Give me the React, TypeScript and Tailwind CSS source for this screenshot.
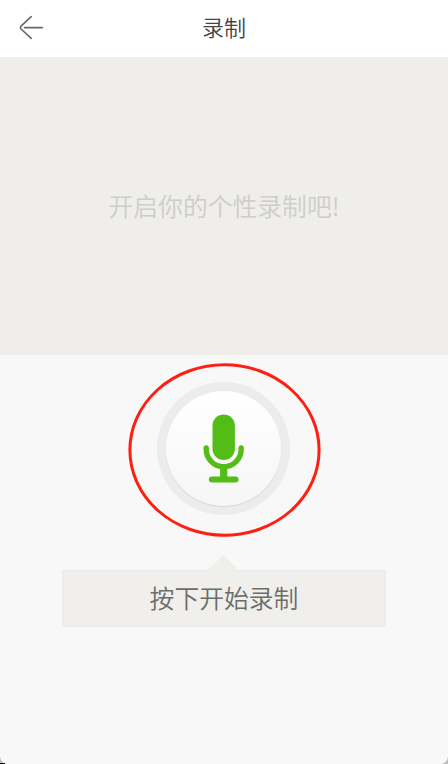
import { useState } from "react";

const BackIcon = () => (
  <svg width="26" height="26" viewBox="0 0 26 26" fill="none" stroke="#686868" strokeWidth="1.6" strokeLinecap="round">
    <path d="M13.2 2.6 2.8 12.4Q1.8 13.6 2.8 14.8L13.2 24.4" />
    <path d="M6.5 13.6H24.4" />
  </svg>
);

const MicIcon = () => (
  <svg width="43" height="70" viewBox="0 0 43 70" fill="none" stroke="#52bd17" strokeLinecap="round">
    <rect x="10.5" y="1.4" width="22.4" height="45.6" rx="11.2" fill="#52bd17" stroke="none" />
    <path d="M4.2 35V36.2A17.5 17.5 0 0 0 39.2 36.2V35" strokeWidth="5.4" />
    <path d="M21.7 54V66" strokeWidth="7.2" strokeLinecap="butt" />
    <path d="M9.8 66.5H33.6" strokeWidth="5.8" />
  </svg>
);

export default function RecordPage() {
  const [recording, setRecording] = useState(false);

  return (
    <div className="relative flex h-[764px] w-[448px] flex-col overflow-hidden bg-[#f8f8f8] font-['Noto_Sans_CJK_SC',sans-serif]">
      <header className="grid h-[57px] shrink-0 grid-cols-[1fr_auto_1fr] items-center bg-white pb-[4px]">
        <button className="ml-[18px] w-fit" aria-label="返回">
          <BackIcon />
        </button>
        <h1 className="-mt-[2px] text-[22px] font-[350] leading-none text-[#444]">录制</h1>
      </header>

      <section className="flex h-[298px] shrink-0 items-center justify-center bg-[#efeeea] pb-[2px]">
        <p className="text-[24.8px] font-[350] leading-none text-[#cdcdcb]">开启你的个性录制吧!</p>
      </section>

      <main className="flex flex-col items-center">
        <div className="relative mr-[2px] mt-[27px] size-[133px] rounded-full bg-[#ececec] p-[9px]">
          <button
            className="flex size-[115px] items-center justify-center rounded-full bg-linear-to-b from-white to-[#f6f6f6] pb-[2px] shadow-[0_1px_1px_#d4d4d4]"
            aria-pressed={recording}
            aria-label="录制"
            onClick={() => setRecording(!recording)}
          >
            <MicIcon />
          </button>
          {/* highlight ring around the button */}
          <svg className="pointer-events-none absolute -left-[29px] -top-[20px]" width="194" height="176" viewBox="0 0 194 176" fill="none">
            <ellipse cx="96.5" cy="88" rx="94.6" ry="85.2" stroke="#ff1f12" strokeWidth="3" />
          </svg>
        </div>

        <div className="relative mt-[55px] flex h-[57px] w-[324px] items-center justify-center rounded-[2px] border border-[#eaeae8] bg-[#f0efeb] pb-[2px]">
          <svg className="absolute -top-[16px] left-[145px]" width="32" height="17" viewBox="0 0 32 17">
            <path d="M.5 16.5 15.5 1 30.5 16.5Z" fill="#f0efeb" />
            <path d="M.5 15.5 15.5 1 30.5 15.5" fill="none" stroke="#eaeae8" />
          </svg>
          <p className="text-[24.8px] font-[350] leading-none text-[#6c6c6a]">按下开始录制</p>
        </div>
      </main>

      {/* rounded bottom corners of the screen */}
      <svg className="absolute bottom-0 left-0" width="7" height="7" viewBox="0 0 7 7">
        <path d="M0 0Q1 6 7 7H0Z" fill="#bdbdbd" />
        <path d="M0 6H5V7H0Z" fill="#111" />
      </svg>
      <svg className="absolute bottom-0 right-0" width="7" height="7" viewBox="0 0 7 7">
        <path d="M7 0Q6 6 0 7H7Z" fill="#bdbdbd" />
      </svg>
    </div>
  );
}
